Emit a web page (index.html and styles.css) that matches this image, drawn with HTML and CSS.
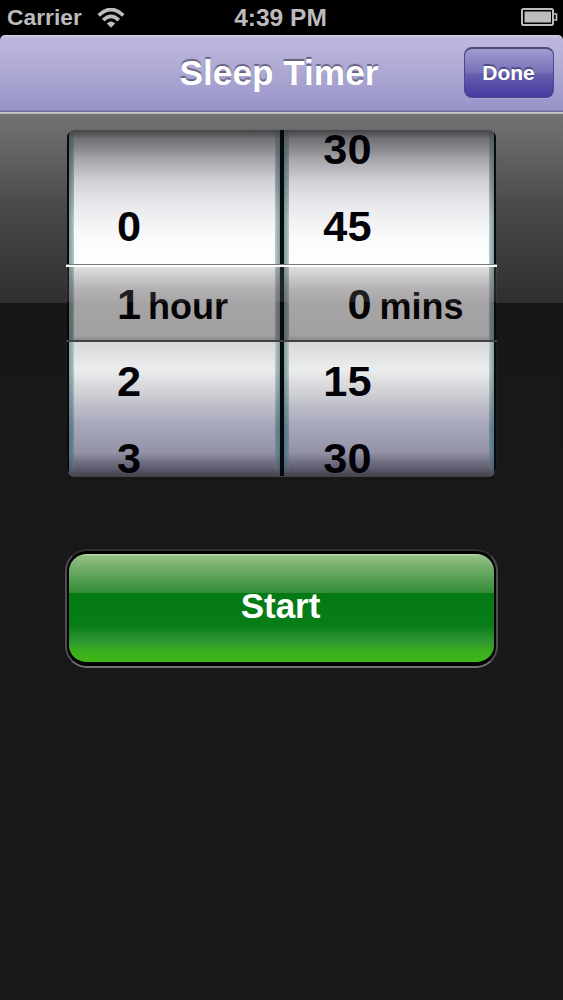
FILE: index.html
```html
<!DOCTYPE html>
<html lang="en">
<head>
<meta charset="utf-8">
<title>Sleep Timer</title>
<link rel="stylesheet" href="styles.css">
</head>
<body>
<div class="status">
  <div class="carrier">
    <span class="carrier-name">Carrier</span>
    <svg class="wifi" width="28" height="20" viewBox="0 0 28 20">
      <path d="M1.7 7.4Q14-4.4 26.3 7.4" fill="none" stroke="#bdbbbd" stroke-width="3.7"/>
      <path d="M6.2 12.2Q14 4.6 21.8 12.2" fill="none" stroke="#bdbbbd" stroke-width="3.7"/>
      <path d="M9.8 15.6Q14 11.4 18.2 15.6L14 19.8Z" fill="#bdbbbd"/>
    </svg>
  </div>
  <span class="clock">4:39 PM</span>
  <svg class="battery" width="37" height="18" viewBox="0 0 37 18">
    <rect x="1" y="1" width="31" height="16" rx="1.5" fill="none" stroke="#bdbbbd" stroke-width="2"/>
    <rect x="3.5" y="3.5" width="26.5" height="11" fill="#bdbbbd"/>
    <path d="M33 6h2.5v6H33" fill="none" stroke="#bdbbbd" stroke-width="1.7"/>
  </svg>
</div>
<header class="navbar">
  <h1 class="title">Sleep Timer</h1>
  <button class="done">Done</button>
</header>
<main class="content">
  <div class="picker">
    <div class="wheels">
      <div class="wheel hours">
        <div class="row"></div>
        <div class="row"><span class="num">0</span></div>
        <div class="row selected"><span class="num">1</span><span class="unit">hour</span></div>
        <div class="row"><span class="num">2</span></div>
        <div class="row"><span class="num">3</span></div>
      </div>
      <div class="wheel minutes">
        <div class="row"><span class="num">30</span></div>
        <div class="row"><span class="num">45</span></div>
        <div class="row selected"><span class="num">0</span><span class="unit">mins</span></div>
        <div class="row"><span class="num">15</span></div>
        <div class="row"><span class="num">30</span></div>
      </div>
    </div>
    <div class="selection"></div>
  </div>
  <button class="start">Start</button>
</main>
</body>
</html>
```

FILE: styles.css
```css
* { box-sizing: border-box; }
body {
  margin: 0;
  height: 1000px;
  display: flex;
  flex-direction: column;
  overflow: hidden;
  background: #000;
  font-family: "Liberation Sans", Arial, sans-serif;
  font-weight: bold;
}
button { font-family: inherit; font-weight: bold; padding: 0; }

.status {
  height: 35px;
  flex: none;
  display: grid;
  grid-template-columns: 1fr auto 1fr;
  align-items: center;
  padding: 0 5px 0 7px;
  color: #bdbbbd;
}
.carrier { display: flex; align-items: center; gap: 15px; }
.carrier-name { font-size: 22.8px; line-height: 35px; }
.wifi { display: block; }
.clock { font-size: 24.5px; line-height: 35px; margin-right: 4px; }
.battery { justify-self: end; margin-bottom: 2px; }

.navbar {
  height: 79px;
  flex: none;
  display: grid;
  grid-template-columns: 1fr auto 1fr;
  align-items: center;
  padding: 0 9px 4px;
  border-radius: 5px 5px 0 0;
  background: linear-gradient(#cfcce4 0, #bdb9dd 3px, #aaa6d2 42px, #9993c9 75px, #716d96 76px, #716d96 77px, #c9c8ce 77px, #b5b5b8 79px);
}
.title {
  grid-column: 2;
  margin: 0 5px 0 0;
  font-size: 35.2px;
  line-height: 75px;
  color: #fff;
  text-shadow: 0 -2px 1px #65627f;
}
.done {
  justify-self: end;
  width: 90px;
  height: 51px;
  border: 1px solid #4b478d;
  border-top: 2px solid #4e4b77;
  border-radius: 8px;
  background: linear-gradient(#a09bce, #7772b8 49%, #655fae 52%, #453a9f);
  box-shadow: 0 1px 0 #aaa6d8;
  color: #fff;
  font-size: 21px;
  line-height: 46px;
  text-indent: -1px;
  text-shadow: 0 -2px 1px #4d4884;
}

.content {
  flex: 1;
  display: flex;
  flex-direction: column;
  align-items: center;
  gap: 73px;
  padding-top: 16px;
  background:
    linear-gradient(#717371, #6a6b6a 20px, #4c4b4c 90px, #2f2d2f 189px, transparent 189px),
    linear-gradient(#171717, #19191b);
}

.picker { position: relative; width: 431px; height: 346px; padding: 0 1px; }
.wheels {
  height: 346px;
  display: flex;
  gap: 4px;
  padding: 0 2px;
  overflow: hidden;
  border-radius: 8px;
  background: #050a0c;
  box-shadow: 0 1px 0 #434545, 0 0 1px #555;
}
.wheel {
  flex: 1;
  display: flex;
  flex-direction: column;
  padding: 0 5px;
  background:
    linear-gradient(#454549 0, rgba(90,90,94,.4) 9px, transparent 28px, transparent 322px, rgba(75,73,90,.5) 338px, #46434f 346px),
    linear-gradient(rgba(40,50,60,.65) 0, transparent 90px, transparent 240px, rgba(40,75,105,.5) 300px) 0 0 / 5px 100% no-repeat,
    linear-gradient(rgba(40,50,60,.65) 0, transparent 90px, transparent 240px, rgba(40,75,105,.5) 300px) 100% 0 / 5px 100% no-repeat,
    linear-gradient(90deg, #829d9d 0, #9db2b2 3px, #bccaca 5px, transparent 5px, transparent calc(100% - 5px), #bccaca calc(100% - 5px), #829d9d 100%),
    linear-gradient(#747477 0, #a1a0a5 27px, #cfced5 50px, #e9e9ed 75px, #fbfbfc 108px, #fff 135px, #fff 205px, #d8d8d9 211px, #ecedee 240px, #ceced4 264px, #aaaabd 292px, #9190a5 325px, #656376 346px);
}
.wheel::before { content: ""; flex: none; height: 0; margin-top: -19px; }
.row {
  flex: none;
  height: 77.3px;
  display: flex;
  align-items: baseline;
  line-height: 77px;
  color: #020207;
}
.num { font-size: 43.3px; text-align: right; }
.hours .num { width: 67px; }
.minutes .num { width: 83px; }
.unit { font-size: 36px; margin-left: 7px; }
.minutes .unit { margin-left: 8px; }
.selected { color: #000; text-shadow: 0 2px 1px #fff; }

.selection {
  position: absolute;
  left: 0;
  top: 134px;
  width: 431px;
  height: 78px;
  background: linear-gradient(#777 0, #777 1px, #fff 1px, #fff 3px, rgba(110,108,111,.22) 3px, rgba(75,70,74,.42) 25px, rgba(65,60,64,.46) 38px, rgba(14,8,12,.37) 38px, rgba(14,8,12,.39) 76px, #414143 76px);
}

.start {
  width: 433px;
  height: 119px;
  padding: 3px 2px 4px;
  border: 2px solid #4f4c4f;
  border-top-color: #302e30;
  border-bottom-color: #747174;
  border-radius: 22px;
  background:
    linear-gradient(#c3dfb8 0, #94c084 2px, #70ab69 15px, #328d37 39px, #057a14 39px, #087e18 72px, #309735 88px, #38ad20 96px, #40b716 108px) content-box,
    #000;
  color: #fff;
  font-size: 35px;
  line-height: 104px;
  display: flex;
  justify-content: center;
  align-items: flex-start;
  text-indent: -2px;
}
```
